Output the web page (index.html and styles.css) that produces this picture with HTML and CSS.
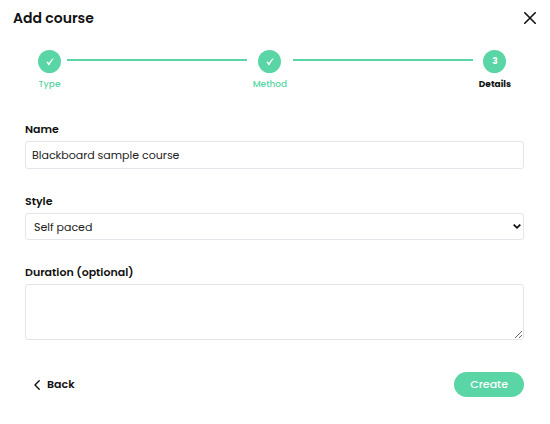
FILE: index.html
```
<!DOCTYPE html>
<html lang="en">
<head>
    <meta charset="UTF-8">
    <meta name="viewport" content="width=device-width, initial-scale=1.0">
    <title>Add course</title>
    <link rel="stylesheet" href="styles.css">
</head>
<body>
    <header class="modal-header">
        <h1>Add course</h1>
        <button type="button" class="close" aria-label="Close">
            <svg width="12" height="12" viewBox="0 0 12 12" fill="none" stroke="#111" stroke-width="1.6" stroke-linecap="round">
                <path d="M0.8 0.8 L11.2 11.2 M11.2 0.8 L0.8 11.2"/>
            </svg>
        </button>
    </header>

    <!-- Progress steps -->
    <ol class="steps">
        <li class="step">
            <span class="circle">
                <svg width="8" height="8" viewBox="0 0 8 8" fill="#fff">
                    <path d="M0.4 4.2 L1.8 3.5 L2.9 4.9 Q4.5 2 7 0.2 L7.7 0.5 Q5.2 3.6 3.5 7.1 L2.4 7.2 Q1.5 5.4 0.4 4.2 Z"/>
                </svg>
            </span>
            <span class="step-name">Type</span>
        </li>
        <li class="line"></li>
        <li class="step">
            <span class="circle">
                <svg width="8" height="8" viewBox="0 0 8 8" fill="#fff">
                    <path d="M0.4 4.2 L1.8 3.5 L2.9 4.9 Q4.5 2 7 0.2 L7.7 0.5 Q5.2 3.6 3.5 7.1 L2.4 7.2 Q1.5 5.4 0.4 4.2 Z"/>
                </svg>
            </span>
            <span class="step-name">Method</span>
        </li>
        <li class="line"></li>
        <li class="step current">
            <span class="circle">3</span>
            <span class="step-name">Details</span>
        </li>
    </ol>

    <form class="course-form">
        <div class="field">
            <label for="name">Name</label>
            <input type="text" id="name" name="name" value="Blackboard sample course">
        </div>

        <div class="field">
            <label for="style">Style</label>
            <div class="select-wrap">
                <select id="style" name="style">
                    <option>Self paced</option>
                </select>
                <svg class="arrow" width="8" height="6" viewBox="0 0 8 6" fill="none" stroke="#111" stroke-width="1.8">
                    <path d="M0.7 0.6 L4 3.8 L7.3 0.6"/>
                </svg>
            </div>
        </div>

        <div class="field">
            <label for="duration">Duration (optional)</label>
            <textarea id="duration" name="duration"></textarea>
        </div>

        <div class="actions">
            <button type="button" class="back">
                <svg width="6" height="10" viewBox="0 0 6 10" fill="none" stroke="#111" stroke-width="1.4" stroke-linecap="round" stroke-linejoin="round">
                    <path d="M5.2 0.8 L1 5 L5.2 9.2"/>
                </svg>
                Back
            </button>
            <button type="submit" class="create">Create</button>
        </div>
    </form>
</body>
</html>
```

FILE: styles.css
```
* {
    box-sizing: border-box;
}

body {
    font-family: Poppins, Inter, sans-serif;
    font-size: 11px;
    background-color: #fff;
    color: #111;
    margin: 0;
}

button {
    font-family: inherit;
    font-size: 11px;
    border: none;
    background: none;
    padding: 0;
    cursor: pointer;
}

.modal-header {
    display: flex;
    justify-content: space-between;
    align-items: center;
    padding: 8px 14px 0 13px;
}

h1 {
    font-size: 14px;
    line-height: 20px;
    font-weight: 600;
    margin: 0;
}

.close {
    display: flex;
}

.steps {
    display: flex;
    gap: 6px;
    list-style: none;
    margin: 22px 39px 0 38px;
    padding: 0;
}

.step {
    display: flex;
    flex-direction: column;
    align-items: center;
    gap: 4px;
    color: #5ad5a5;
}

.circle {
    display: flex;
    align-items: center;
    justify-content: center;
    width: 23px;
    height: 23px;
    border-radius: 50%;
    background-color: #5ad5a5;
    color: #fff;
    font-size: 9px;
    font-weight: 700;
}

.step-name {
    font-size: 9px;
    line-height: 14px;
    font-weight: 500;
}

.current .step-name {
    color: #111;
    font-weight: 700;
}

.line {
    flex: 1;
    height: 2px;
    margin-top: 9px;
    background-color: #5ad5a5;
}

.course-form {
    display: flex;
    flex-direction: column;
    gap: 22px;
    padding: 28px 26px 28px 25px;
}

.field {
    display: flex;
    flex-direction: column;
    gap: 2px;
}

label {
    line-height: 20px;
    font-weight: 600;
}

input,
select,
textarea {
    font-family: inherit;
    font-size: 11px;
    color: #222;
    background-color: #fff;
    border: 1px solid #e4e4ec;
    border-radius: 3px;
    width: 100%;
    height: 28px;
    margin: 0;
    padding: 0 6px;
}

.select-wrap {
    position: relative;
}

select {
    display: block;
    appearance: none;
    height: 27px;
    padding: 0 20px 0 8px;
}

/* arrow sits over the select */
.arrow {
    position: absolute;
    top: 11px;
    right: 3px;
    pointer-events: none;
}

textarea {
    height: 56px;
    resize: vertical;
}

.actions {
    display: flex;
    justify-content: space-between;
    align-items: center;
    margin-top: 10px;
}

.back {
    display: flex;
    align-items: center;
    gap: 7px;
    padding-left: 9px;
    font-weight: 600;
    color: #111;
}

.create {
    height: 25px;
    padding: 0 16px;
    border-radius: 13px;
    background-color: #5ad5a5;
    color: #fff;
    font-weight: 500;
}
```
